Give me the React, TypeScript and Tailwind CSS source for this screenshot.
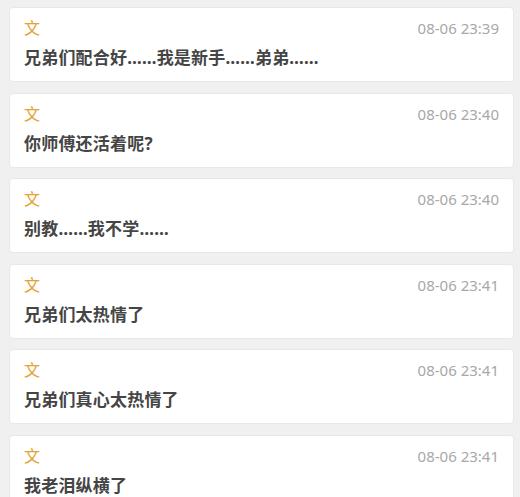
import React from 'react';

const messages = [
  { time: '08-06 23:39', text: '兄弟们配合好……我是新手……弟弟……' },
  { time: '08-06 23:40', text: '你师傅还活着呢?' },
  { time: '08-06 23:40', text: '别教……我不学……' },
  { time: '08-06 23:41', text: '兄弟们太热情了' },
  { time: '08-06 23:41', text: '兄弟们真心太热情了' },
  { time: '08-06 23:41', text: '我老泪纵横了' },
];

export default function App() {
  return (
    <div
      className="h-[497px] w-[520px] overflow-hidden bg-[#f0f0f0] pl-[9px] pr-[6px] pt-[7px]"
      style={{ fontFamily: '"Noto Sans", "Noto Sans CJK SC", sans-serif' }}
    >
      <div className="flex flex-col gap-[10.5px]">
        {messages.map((m, i) => (
          <div
            key={i}
            className="h-[75px] shrink-0 rounded-[4px] border border-[#e8e8e8] bg-white px-[14px] pt-[8px]"
          >
            <div className="flex h-6 items-center justify-between">
              <span className="text-[16px] leading-6 text-[#e3a232]">文</span>
              <span className="text-[15px] leading-6 text-[#a8a8a8]">{m.time}</span>
            </div>
            <div className="mt-[5px] text-[17px] font-bold leading-[26px] tracking-[0.2px] text-[#454545]">
              {m.text}
            </div>
          </div>
        ))}
      </div>
    </div>
  );
}
